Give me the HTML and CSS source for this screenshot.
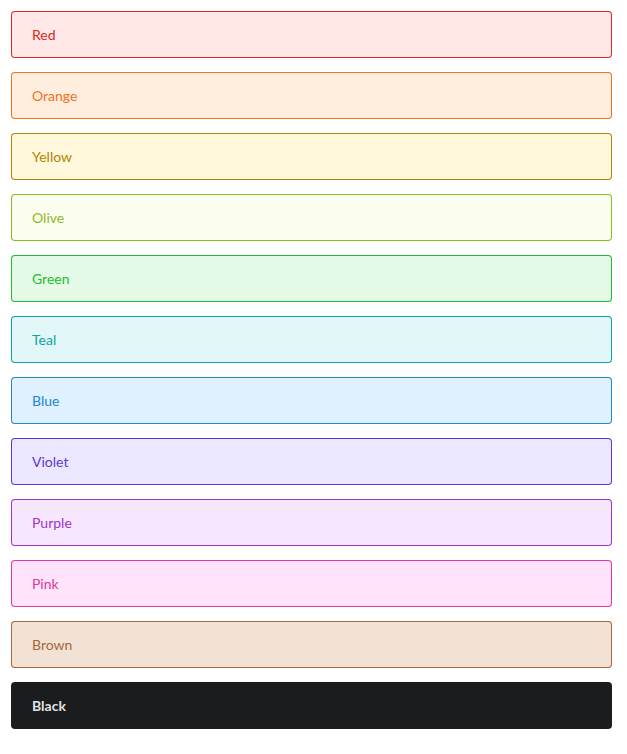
FILE: index.html
```html
<!DOCTYPE html>
<html>
<head>
<meta charset="utf-8">
<link rel="stylesheet" href="styles.css">
</head>
<body>
<div class="list">
  <div class="msg red">Red</div>
  <div class="msg orange">Orange</div>
  <div class="msg yellow">Yellow</div>
  <div class="msg olive">Olive</div>
  <div class="msg green">Green</div>
  <div class="msg teal">Teal</div>
  <div class="msg blue">Blue</div>
  <div class="msg violet">Violet</div>
  <div class="msg purple">Purple</div>
  <div class="msg pink">Pink</div>
  <div class="msg brown">Brown</div>
  <div class="msg black">Black</div>
</div>
</body>
</html>
```
FILE: styles.css
```css
html, body { margin: 0; padding: 0; background: #fff; }
body { font-family: Lato, "Helvetica Neue", Arial, sans-serif; font-size: 14px; }
.list { display: flex; flex-direction: column; gap: 14px; padding: 11px 15px 11px 11px; }
.msg {
  padding: 14px 21px;
  line-height: 19px;
  border-radius: 4px;
  font-weight: 400;
  -webkit-font-smoothing: antialiased;
}
.red { background: #FFE8E6; color: #DB2828; box-shadow: 0 0 0 1px #DB2828 inset; }
.orange { background: #FFEDDE; color: #F2711C; box-shadow: 0 0 0 1px #F2711C inset; }
.yellow { background: #FFF8DB; color: #B58105; box-shadow: 0 0 0 1px #B58105 inset; }
.olive { background: #FBFDEF; color: #8ABC1E; box-shadow: 0 0 0 1px #8ABC1E inset; }
.green { background: #E5F9E7; color: #1EBC30; box-shadow: 0 0 0 1px #1EBC30 inset; }
.teal { background: #E1F7F7; color: #10A3A3; box-shadow: 0 0 0 1px #10A3A3 inset; }
.blue { background: #DFF0FF; color: #2185D0; box-shadow: 0 0 0 1px #2185D0 inset; }
.violet { background: #EAE7FF; color: #6435C9; box-shadow: 0 0 0 1px #6435C9 inset; }
.purple { background: #F6E7FF; color: #A333C8; box-shadow: 0 0 0 1px #A333C8 inset; }
.pink { background: #FFE3FB; color: #E03997; box-shadow: 0 0 0 1px #E03997 inset; }
.brown { background: #F1E2D3; color: #A5673F; box-shadow: 0 0 0 1px #A5673F inset; }
.black { background: #1B1C1D; color: rgba(255,255,255,0.9); font-weight: 700; }
```
